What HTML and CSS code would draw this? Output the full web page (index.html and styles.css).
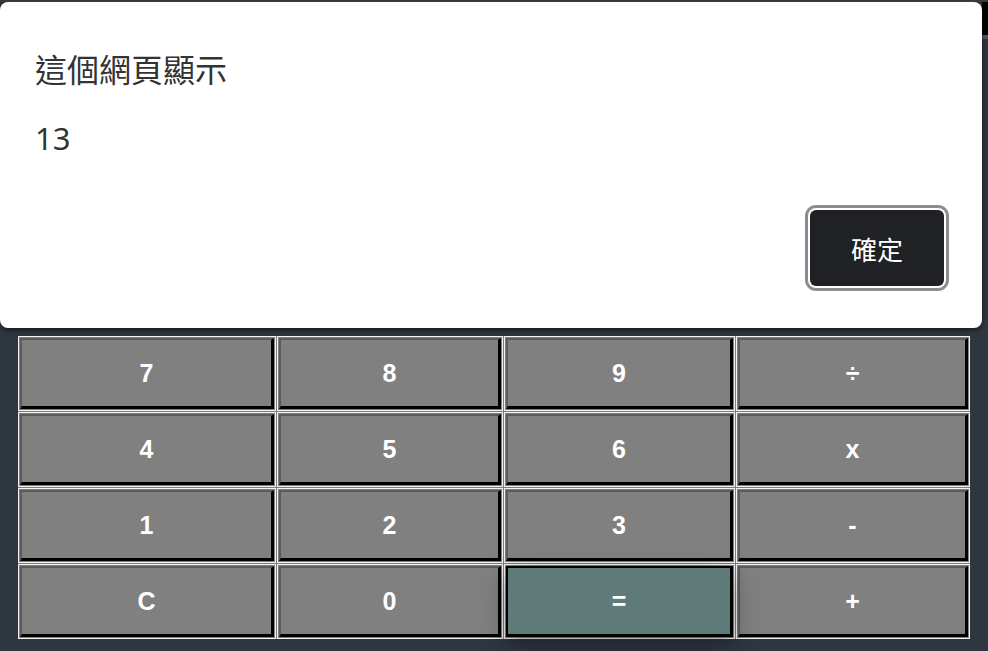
FILE: index.html
```html
<!DOCTYPE html>
<html lang="zh-Hant">
<head>
<meta charset="utf-8">
<title>Calculator</title>
<link rel="stylesheet" href="styles.css">
</head>
<body>
<div class="page">
  <div class="keypad">
    <div class="cell"><button class="key">7</button></div>
    <div class="cell"><button class="key">8</button></div>
    <div class="cell"><button class="key">9</button></div>
    <div class="cell"><button class="key">÷</button></div>
    <div class="cell"><button class="key">4</button></div>
    <div class="cell"><button class="key">5</button></div>
    <div class="cell"><button class="key">6</button></div>
    <div class="cell"><button class="key">x</button></div>
    <div class="cell"><button class="key">1</button></div>
    <div class="cell"><button class="key">2</button></div>
    <div class="cell"><button class="key">3</button></div>
    <div class="cell"><button class="key">-</button></div>
    <div class="cell"><button class="key">C</button></div>
    <div class="cell"><button class="key">0</button></div>
    <div class="cell cell-active"><button class="key key-equals">=</button></div>
    <div class="cell"><button class="key">+</button></div>
  </div>
</div>
<div class="edge-strip"></div>
<div class="dialog">
  <div class="dialog-title">這個網頁顯示</div>
  <div class="dialog-message">13</div>
  <div class="dialog-actions">
    <button class="dialog-ok">確定</button>
  </div>
</div>
</body>
</html>
```
FILE: styles.css
```css
html, body {
  margin: 0;
  padding: 0;
}
body {
  width: 988px;
  height: 651px;
  background: #2e3640;
  overflow: hidden;
  position: relative;
  border-top: 2px solid #3a3a3a;
  box-sizing: border-box;
}
.page {
  padding: 334px 0 0 18px;
}
.keypad {
  display: grid;
  grid-template-columns: 258px 226px 231px 234px;
  grid-template-rows: repeat(4, 75px);
  gap: 1px;
  width: 952px;
  background: #7d7d7d;
}
.cell {
  border: 1px solid #f2f2f2;
  padding: 1px;
  background: #808080;
  display: flex;
  position: relative;
}
.cell-active {
  z-index: 1;
}
.key {
  flex: 1;
  margin: 0;
  padding: 0;
  background: #808080;
  color: #ffffff;
  font-family: "Liberation Sans", Arial, sans-serif;
  font-weight: bold;
  font-size: 25px;
  border-style: solid;
  border-width: 2px 3px 3px 2px;
  border-color: #5b5b5b #000 #000 #5b5b5b;
}
.key-equals {
  background: #5e7b7a;
  border-color: #000;
  box-shadow: 0 8px 24px rgba(0, 0, 0, 0.35);
}
.edge-strip {
  position: absolute;
  top: 0;
  right: 0;
  width: 6px;
  height: 33px;
  background: #000;
  border-bottom: 4px solid #555;
}
.dialog {
  position: absolute;
  top: 0;
  left: 0;
  width: 982px;
  height: 326px;
  box-sizing: border-box;
  background: #ffffff;
  border-radius: 8px;
  box-shadow: 0 2px 5px rgba(0, 0, 0, 0.5);
  padding: 46px 38px 42px 35px;
  display: flex;
  flex-direction: column;
  font-family: "Noto Sans CJK TC", "Noto Sans", sans-serif;
  color: #333333;
}
.dialog-title {
  font-size: 32px;
  line-height: 40px;
  height: 40px;
}
.dialog-message {
  margin-top: 30px;
  font-size: 31px;
  line-height: 40px;
  height: 40px;
  font-family: "Noto Sans", "Noto Sans CJK TC", sans-serif;
}
.dialog-actions {
  margin-top: auto;
  display: flex;
  justify-content: flex-end;
}
.dialog-ok {
  width: 134px;
  height: 76px;
  border: none;
  border-radius: 6px;
  background: #202124;
  color: #ffffff;
  font-family: "Noto Sans CJK TC", sans-serif;
  font-size: 26px;
  box-shadow: 0 0 0 2px #ffffff, 0 0 0 5px #8a8c8f;
  padding: 0;
}
```
